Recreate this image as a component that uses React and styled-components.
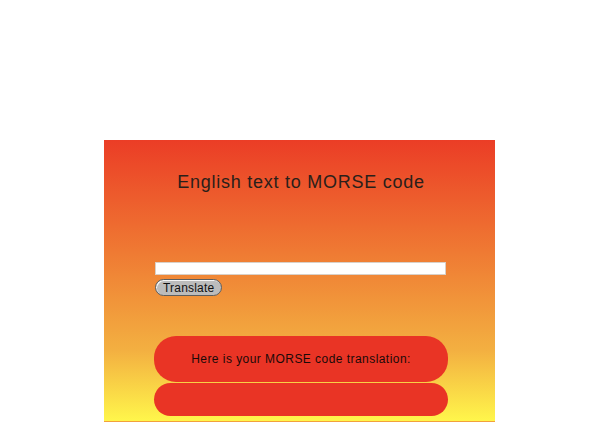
import React from 'react';
import styled, { createGlobalStyle } from 'styled-components';

const GlobalStyle = createGlobalStyle`
  html, body {
    margin: 0;
    padding: 0;
    background: #ffffff;
    font-family: "Liberation Sans", Arial, sans-serif;
  }
`;

const Page = styled.div`
  padding: 140px 0 0 104px;
`;

const Panel = styled.div`
  width: 391px;
  height: 282px;
  box-sizing: border-box;
  border-bottom: 1px solid #f2a13c;
  background: linear-gradient(180deg, #eb3d26 0%, #ef7a33 40%, #f3b041 75%, #fff64b 100%);
  display: flex;
  flex-direction: column;
  padding: 31px 47px 0 50px;
`;

const Title = styled.h1`
  margin: 0;
  font-size: 18px;
  letter-spacing: 0.75px;
  font-weight: normal;
  line-height: 22px;
  color: #2a1f1a;
  text-align: center;
`;

const Form = styled.div`
  display: flex;
  flex-direction: column;
  align-items: flex-start;
  gap: 4px;
  margin: 69px 0 0 1px;
`;

const TextInput = styled.input`
  width: 291px;
  height: 13px;
  box-sizing: border-box;
  border: 1px solid #d8d0c8;
  background: #ffffff;
  padding: 0;
  margin: 0;
`;

const Button = styled.button`
  height: 17px;
  padding: 0 7px;
  border: 1px solid #5e5e5e;
  border-radius: 9px;
  background: #bcbcbc;
  font-family: "Liberation Sans", Arial, sans-serif;
  font-size: 12px;
  letter-spacing: 0.2px;
  line-height: 14px;
  color: #111;
  box-shadow: inset 1px 1px 0 #f4f4f4;
`;

const Results = styled.div`
  display: flex;
  flex-direction: column;
  gap: 1px;
  margin-top: 40px;
`;

const Pill = styled.div`
  width: 294px;
  height: ${p => p.$h}px;
  border-radius: 22px;
  background: #e93425;
  display: flex;
  align-items: center;
  justify-content: center;
  font-size: 12px;
  letter-spacing: 0.45px;
  color: #1a0a08;
`;

export default function App() {
  return (
    <>
      <GlobalStyle />
      <Page>
        <Panel>
          <Title>English text to MORSE code</Title>
          <Form>
            <TextInput type="text" />
            <Button>Translate</Button>
          </Form>
          <Results>
            <Pill $h={46}>Here is your MORSE code translation:</Pill>
            <Pill $h={33} />
          </Results>
        </Panel>
      </Page>
    </>
  );
}
